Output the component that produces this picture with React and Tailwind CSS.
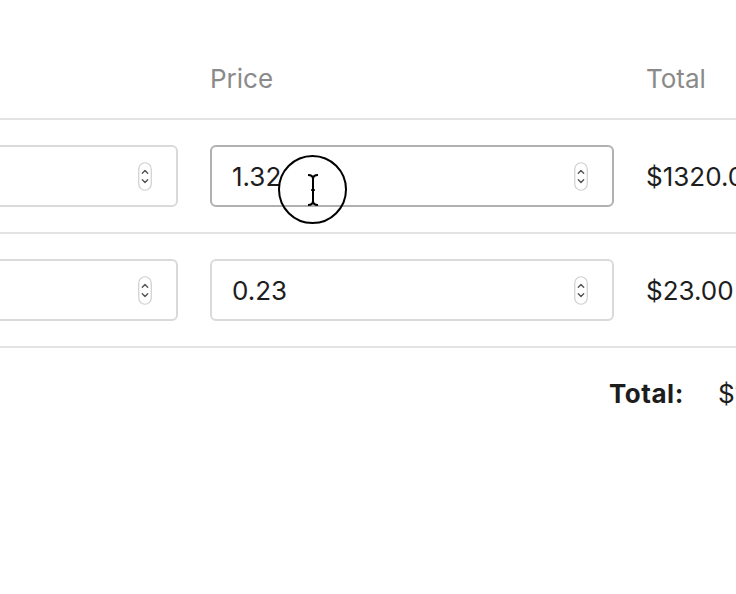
import React from 'react';

const rows = [
  { qty: '1000', price: '1.32', total: '$1320.00', active: true },
  { qty: '100', price: '0.23', total: '$23.00', active: false },
];

const Spinner = () => (
  <svg width="14" height="29" viewBox="0 0 14 29" className="shrink-0">
    <rect x="0.75" y="0.75" width="12.5" height="27.5" rx="6.25" fill="#fff" stroke="#cfcfcf" strokeWidth="1.2" />
    <path d="M4.3 11.3 L7 8.6 L9.7 11.3" fill="none" stroke="#555" strokeWidth="1.4" strokeLinecap="round" strokeLinejoin="round" />
    <path d="M4.3 17.7 L7 20.4 L9.7 17.7" fill="none" stroke="#555" strokeWidth="1.4" strokeLinecap="round" strokeLinejoin="round" />
  </svg>
);

const NumberField = ({ value, active }) => (
  <div
    className={`flex h-[62px] w-full items-center justify-between rounded-[6px] border-2 bg-white pl-[20px] pr-[24px] ${
      active ? 'border-[#b0b0b0]' : 'border-[#dadada]'
    }`}
  >
    <span className="text-[26px] text-[#1d1d1d]">{value}</span>
    <Spinner />
  </div>
);

export default function App() {
  return (
    <div className="relative h-[594px] w-[736px] overflow-hidden bg-white" style={{ fontFamily: 'Inter, "Liberation Sans", sans-serif' }}>
      <div className="ml-[-260px] w-[1100px]">
        {/* header */}
        <div className="mt-[39px] flex h-[81px] items-center border-b-2 border-[#e3e3e3] text-[26px] text-[#8a8a8a]">
          <div className="w-[454px] px-4">Quantity</div>
          <div className="w-[436px] px-4">Price</div>
          <div className="px-[16px]">Total</div>
        </div>

        {rows.map((r, i) => (
          <div key={i} className="flex h-[114px] items-center border-b-2 border-[#e3e3e3]">
            <div className="w-[454px] px-4">
              <NumberField value={r.qty} />
            </div>
            <div className="w-[436px] px-4">
              <NumberField value={r.price} active={r.active} />
            </div>
            <div className="whitespace-nowrap px-[16px] text-[26px] text-[#1d1d1d]">{r.total}</div>
          </div>
        ))}

        <div className="flex h-[90px] items-center pl-[869px] text-[26px] text-[#1d1d1d]">
          <span className="w-[109px] font-bold tracking-[0.02em]">Total:</span>
          <span>$1343.00</span>
        </div>
      </div>

      {/* pointer highlight */}
      <div className="pointer-events-none absolute left-[278px] top-[155px] flex h-[69px] w-[69px] items-center justify-center rounded-full border-2 border-black">
        <svg width="14" height="34" viewBox="0 0 14 34">
          <path d="M2 2 C5 2 7 3 7 6 C7 3 9 2 12 2" fill="none" stroke="#000" strokeWidth="2" />
          <path d="M7 6 L7 28" stroke="#000" strokeWidth="2" />
          <path d="M5 17 L9 17" stroke="#000" strokeWidth="1.6" />
          <path d="M2 32 C5 32 7 31 7 28 C7 31 9 32 12 32" fill="none" stroke="#000" strokeWidth="2" />
        </svg>
      </div>
    </div>
  );
}
